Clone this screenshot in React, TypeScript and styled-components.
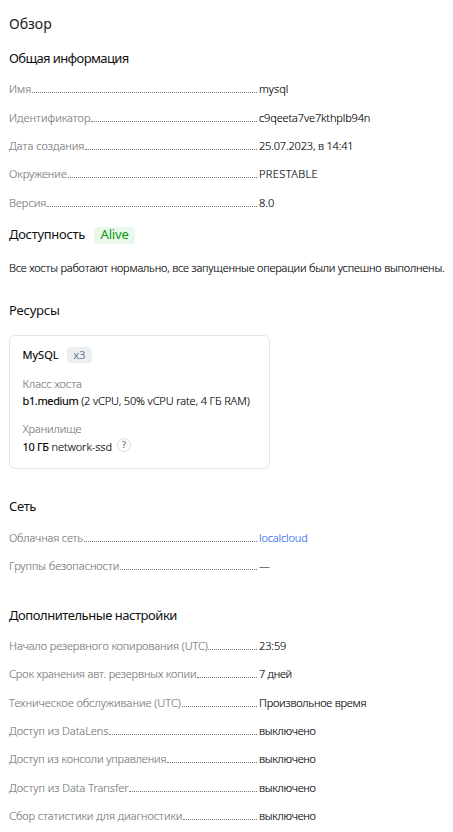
import React from "react";
import styled, { createGlobalStyle } from "styled-components";

const GlobalStyle = createGlobalStyle`
  * { box-sizing: border-box; }
  body {
    margin: 0;
    background: #fff;
    color: #000;
    font: 350 11px/20px "Noto Sans", sans-serif;
    -webkit-text-stroke: 0.12px currentColor;
  }
`;

const Page = styled.main`
  display: flex;
  flex-direction: column;
  width: 453px;
  height: 832px;
  padding: 14px 0 0 9px;
  overflow: hidden;
  white-space: nowrap;
`;

const Title = styled.h1`
  margin: 0 0 14px;
  color: #1c1c1e;
  font-size: 14px;
  font-weight: 400;
  line-height: 20px;
  -webkit-text-stroke: 0;
`;

const Section = styled.section<{ $after?: number }>`
  display: flex;
  flex-direction: column;
  margin-bottom: ${(p) => p.$after ?? 0}px;
`;

const SectionHead = styled.header<{ $after: number }>`
  display: flex;
  align-items: flex-end;
  height: 20px;
  gap: 9px;
  margin-bottom: ${(p) => p.$after}px;
  -webkit-text-stroke: 0;
`;

const Heading = styled.h2<{ $track: number }>`
  margin: 0;
  color: #111;
  font-size: 13px;
  font-weight: 400;
  line-height: 20px;
  letter-spacing: ${(p) => p.$track}px;
`;

const Status = styled.span`
  width: 41px;
  height: 17px;
  border-radius: 4px;
  background: #e9f8ea;
  color: #0c9a0c;
  font-size: 13px;
  font-weight: 400;
  line-height: 15px;
  letter-spacing: -0.15px;
  text-align: center;
`;

const List = styled.dl`
  display: flex;
  flex-direction: column;
  margin: 0;
`;

const Row = styled.div`
  display: grid;
  grid-template-columns: 248px 1fr;
  column-gap: 2px;
  height: 28.35px;
`;

const Term = styled.dt`
  display: flex;
  gap: 0.7px;
`;

const Label = styled.span<{ $track?: number }>`
  color: #77777b;
  font-weight: 300;
  letter-spacing: ${(p) => p.$track ?? 0}px;
`;

const Dots = styled.span`
  flex: 1;
  height: 14px;
  border-bottom: 1px dotted #777;
`;

const Value = styled.dd<{ $track?: number; $link?: boolean }>`
  margin: 0;
  color: ${(p) => (p.$link ? "#3068f5" : "inherit")};
  letter-spacing: ${(p) => p.$track ?? 0}px;
`;

const Message = styled.p`
  margin: 0;
  line-height: 20px;
  letter-spacing: -0.19px;
`;

const Card = styled.article`
  display: flex;
  flex-direction: column;
  width: 261px;
  height: 134px;
  padding: 9px 12.5px;
  border: 1px solid #e5e5e5;
  border-radius: 6px;
`;

const CardHead = styled.div`
  display: flex;
  align-items: center;
  height: 20px;
  margin-bottom: 10px;
  font-weight: 400;
`;

const Count = styled.span`
  width: 25px;
  height: 16px;
  margin: 0 0 0 auto;
  border-radius: 4px;
  background: #ebeff2;
  color: #42546a;
  line-height: 15px;
  font-weight: 350;
  text-align: center;
`;

const CardTitle = styled.div`
  display: flex;
  align-items: center;
  width: 69.5px;
`;

const Spec = styled.div<{ $gap: number }>`
  display: flex;
  flex-direction: column;
  gap: ${(p) => p.$gap}px;
  margin-bottom: 11px;
  line-height: 17px;
`;

const SpecValue = styled.div`
  display: flex;
  align-items: center;
  height: 17px;
  white-space: pre;
`;

const Strong = styled.span<{ $track: number }>`
  font-weight: 420;
  letter-spacing: ${(p) => p.$track}px;
`;

const Detail = styled.span<{ $track: number }>`
  letter-spacing: ${(p) => p.$track}px;
`;

const Help = styled.span`
  width: 14px;
  height: 14px;
  margin: -2px 0 0 5px;
  border: 1px solid #dedede;
  border-radius: 50%;
  color: #777;
  font-size: 9px;
  font-weight: 500;
  line-height: 12px;
  text-align: center;
`;

type Item = { label: string; value: string; lt?: number; vt?: number; link?: boolean };

const general: Item[] = [
  { label: "Имя", value: "mysql", vt: 0 },
  { label: "Идентификатор", value: "c9qeeta7ve7kthplb94n", vt: -0.15 },
  { label: "Дата создания", value: "25.07.2023, в 14:41", vt: -0.17 },
  { label: "Окружение", value: "PRESTABLE", vt: 0.38 },
  { label: "Версия", value: "8.0" },
];

const network: Item[] = [
  { label: "Облачная сеть", value: "localcloud", lt: -0.17, vt: -0.15, link: true },
  { label: "Группы безопасности", value: "—", lt: -0.05 },
];

const extra: Item[] = [
  { label: "Начало резервного копирования (UTC)", value: "23:59", lt: -0.09, vt: -0.12 },
  { label: "Срок хранения авт. резервных копии", value: "7 дней", lt: -0.13, vt: -0.3 },
  { label: "Техническое обслуживание (UTC)", value: "Произвольное время", vt: -0.21 },
  { label: "Доступ из DataLens", value: "выключено", lt: -0.05, vt: -0.25 },
  { label: "Доступ из консоли управления", value: "выключено", lt: -0.1, vt: -0.25 },
  { label: "Доступ из Data Transfer", value: "выключено", lt: -0.04, vt: -0.25 },
  { label: "Сбор статистики для диагностики", value: "выключено", lt: -0.08, vt: -0.25 },
];

function Properties({ items }: { items: Item[] }) {
  return (
    <List>
      {items.map((item) => (
        <Row key={item.label}>
          <Term>
            <Label $track={item.lt}>{item.label}</Label>
            <Dots />
          </Term>
          <Value $track={item.vt} $link={item.link}>{item.value}</Value>
        </Row>
      ))}
    </List>
  );
}

export default function App() {
  return (
    <>
      <GlobalStyle />
      <Page>
        <Title>Обзор</Title>
        <Section $after={2.95}>
          <SectionHead $after={11.3}>
            <Heading $track={-0.61}>Общая информация</Heading>
          </SectionHead>
          <Properties items={general} />
        </Section>
        <Section $after={22}>
          <SectionHead $after={14}>
            <Heading $track={-0.3}>Доступность</Heading>
            <Status>Alive</Status>
          </SectionHead>
          <Message>
            Все хосты работают нормально, все запущенные операции были успешно выполнены.
          </Message>
        </Section>
        <Section $after={27}>
          <SectionHead $after={15}>
            <Heading $track={-0.2}>Ресурсы</Heading>
          </SectionHead>
          <Card>
            <CardHead>
              <CardTitle>
                MySQL
                <Count>x3</Count>
              </CardTitle>
            </CardHead>
            <Spec $gap={0}>
              <Label $track={-0.02}>Класс хоста</Label>
              <SpecValue>
                <Strong $track={-0.36}>b1.medium</Strong>
                <Detail $track={-0.13}> (2 vCPU, 50% vCPU rate, 4 ГБ RAM)</Detail>
              </SpecValue>
            </Spec>
            <Spec $gap={1}>
              <Label $track={-0.12}>Хранилище</Label>
              <SpecValue>
                <Strong $track={-0.33}>10 ГБ</Strong>
                <Detail $track={-0.06}> network-ssd</Detail>
                <Help>?</Help>
              </SpecValue>
            </Spec>
          </Card>
        </Section>
        <Section $after={20.3}>
          <SectionHead $after={12}>
            <Heading $track={-0.35}>Сеть</Heading>
          </SectionHead>
          <Properties items={network} />
        </Section>
        <Section>
          <SectionHead $after={11}>
            <Heading $track={-0.46}>Дополнительные настройки</Heading>
          </SectionHead>
          <Properties items={extra} />
        </Section>
      </Page>
    </>
  );
}
